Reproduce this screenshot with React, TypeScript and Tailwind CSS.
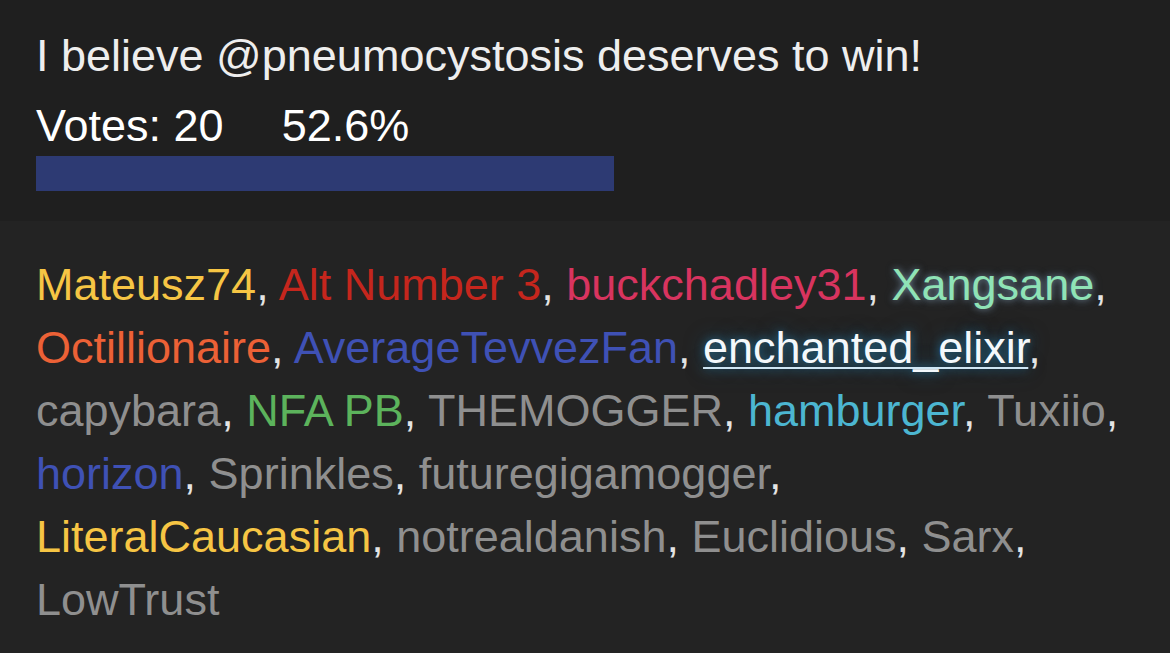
import React from "react";

type Voter = { name: string; cls: string };

const plain = "text-[#8f8f8f]";

const voters: Voter[] = [
  { name: "Mateusz74", cls: "text-[#f6c544]" },
  { name: "Alt Number 3", cls: "text-[#c5261d]" },
  { name: "buckchadley31", cls: "text-[#d8345f]" },
  {
    name: "Xangsane",
    cls: "text-[#8fe3b6] [text-shadow:0_0_6px_rgba(170,200,230,0.5),0_0_12px_rgba(120,170,210,0.3)]",
  },
  { name: "Octillionaire", cls: "text-[#ec6136]" },
  { name: "AverageTevvezFan", cls: "text-[#3f51b5]" },
  {
    name: "enchanted_elixir",
    cls: "text-[#f4f8fb] underline decoration-2 decoration-[#cfe6f4] underline-offset-[4px] [text-shadow:0_0_10px_rgba(40,120,160,0.85),0_0_20px_rgba(30,100,140,0.55)]",
  },
  { name: "capybara", cls: plain },
  { name: "NFA PB", cls: "text-[#5cb35c]" },
  { name: "THEMOGGER", cls: plain },
  { name: "hamburger", cls: "text-[#4cb6d1]" },
  { name: "Tuxiio", cls: plain },
  { name: "horizon", cls: "text-[#3f51b5]" },
  { name: "Sprinkles", cls: plain },
  { name: "futuregigamogger", cls: plain },
  { name: "LiteralCaucasian", cls: "text-[#f6c544]" },
  { name: "notrealdanish", cls: plain },
  { name: "Euclidious", cls: plain },
  { name: "Sarx", cls: plain },
  { name: "LowTrust", cls: plain },
];

export default function App() {
  const pct = 52.6;
  return (
    <div className="w-[1170px] h-[653px] overflow-hidden bg-[#232323] font-['Liberation_Sans',Arial,sans-serif] text-[45px]">
      <section className="bg-[#1f1f1f] pl-9 pr-9 pt-[31px] pb-[30px]">
        <p className="leading-[50px] text-[#eeeeee]">
          I believe @pneumocystosis deserves to win!
        </p>
        <p className="mt-5 leading-[50px] text-white flex gap-[58px]">
          <span>Votes: 20</span>
          <span>{pct}%</span>
        </p>
        <div className="mt-[5px] h-[35px] w-[1098px]">
          <div className="h-full bg-[#2d3a73]" style={{ width: `${pct}%` }} />
        </div>
      </section>
      <section className="pl-9 pr-[42px] pt-8 leading-[63px]">
        <p>
          {voters.map((v, i) => (
            <React.Fragment key={v.name}>
              <span className={v.cls}>{v.name}</span>
              {i < voters.length - 1 && <span className="text-[#e4e4e4]">, </span>}
            </React.Fragment>
          ))}
        </p>
      </section>
    </div>
  );
}
